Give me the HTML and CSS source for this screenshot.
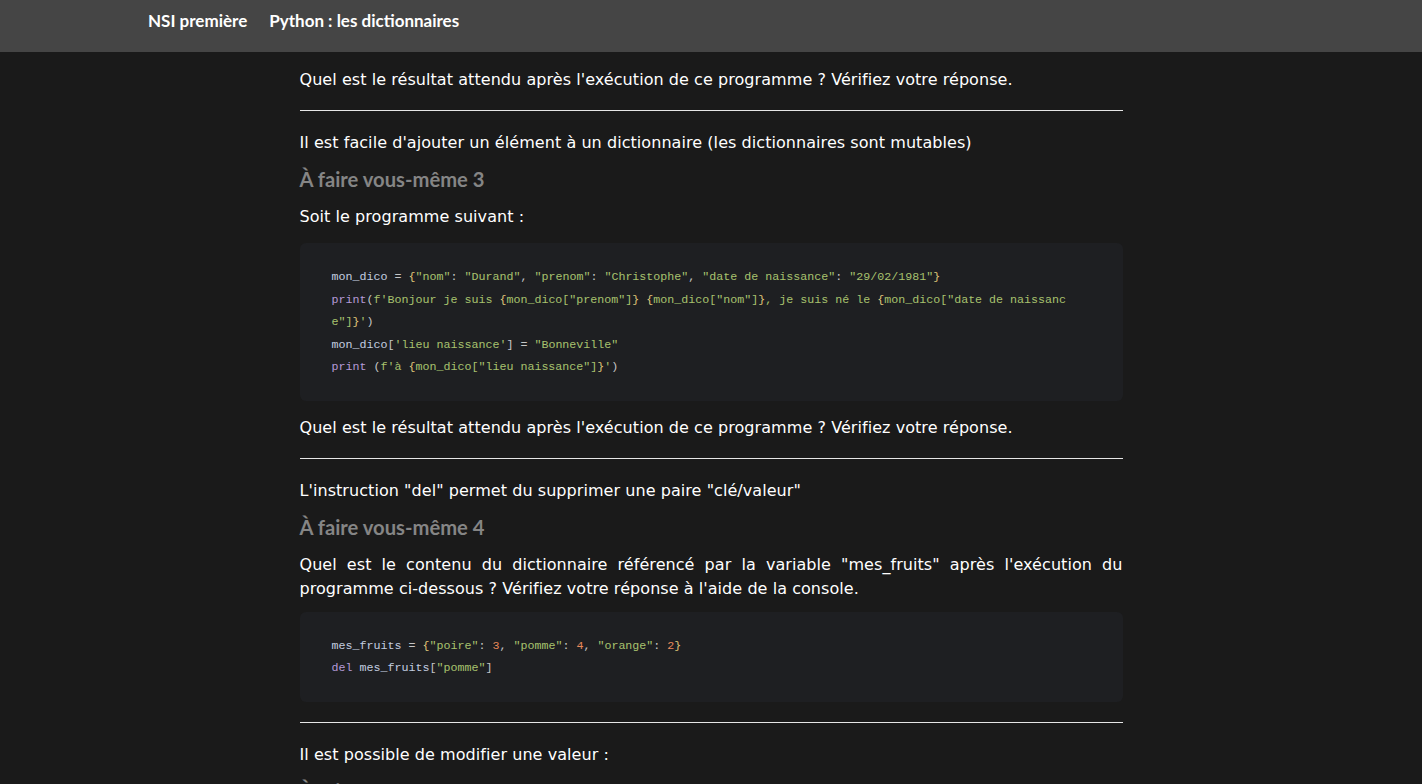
FILE: index.html
```html
<!DOCTYPE html>
<html lang="fr">
<head>
<meta charset="utf-8">
<title>Python : les dictionnaires</title>
<link rel="stylesheet" href="styles.css">
</head>
<body>
<header class="topbar">
  <nav class="topnav">
    <span class="brand">NSI première</span>
    <span class="page-title">Python : les dictionnaires</span>
  </nav>
</header>
<main class="content">
  <p>Quel est le résultat attendu après l'exécution de ce programme ? Vérifiez votre réponse.</p>
  <hr>
  <p>Il est facile d'ajouter un élément à un dictionnaire (les dictionnaires sont mutables)</p>
  <h3>À faire vous-même 3</h3>
  <p>Soit le programme suivant :</p>
  <pre class="code"><span class="id">mon_dico</span> <span class="op">=</span> <span class="br">{</span><span class="str">"nom"</span><span class="op">:</span> <span class="str">"Durand"</span><span class="op">,</span> <span class="str">"prenom"</span><span class="op">:</span> <span class="str">"Christophe"</span><span class="op">,</span> <span class="str">"date de naissance"</span><span class="op">:</span> <span class="str">"29/02/1981"</span><span class="br">}</span>
<span class="kw">print</span><span class="op">(</span><span class="str">f'Bonjour je suis </span><span class="br">{</span><span class="str">mon_dico["prenom"]</span><span class="br">}</span><span class="str"> </span><span class="br">{</span><span class="str">mon_dico["nom"]</span><span class="br">}</span><span class="str">, je suis né le </span><span class="br">{</span><span class="str">mon_dico["date de naissance"]</span><span class="br">}</span><span class="str">'</span><span class="op">)</span>
<span class="id">mon_dico</span><span class="op">[</span><span class="str">'lieu naissance'</span><span class="op">]</span> <span class="op">=</span> <span class="str">"Bonneville"</span>
<span class="kw">print</span> <span class="op">(</span><span class="str">f'à </span><span class="br">{</span><span class="str">mon_dico["lieu naissance"]</span><span class="br">}</span><span class="str">'</span><span class="op">)</span></pre>
  <p>Quel est le résultat attendu après l'exécution de ce programme ? Vérifiez votre réponse.</p>
  <hr>
  <p>L'instruction "del" permet du supprimer une paire "clé/valeur"</p>
  <h3>À faire vous-même 4</h3>
  <p>Quel est le contenu du dictionnaire référencé par la variable "mes_fruits" après l'exécution du programme ci-dessous ? Vérifiez votre réponse à l'aide de la console.</p>
  <pre class="code code-close"><span class="id">mes_fruits</span> <span class="op">=</span> <span class="br">{</span><span class="str">"poire"</span><span class="op">:</span> <span class="num">3</span><span class="op">,</span> <span class="str">"pomme"</span><span class="op">:</span> <span class="num">4</span><span class="op">,</span> <span class="str">"orange"</span><span class="op">:</span> <span class="num">2</span><span class="br">}</span>
<span class="kw">del</span> <span class="id">mes_fruits</span><span class="op">[</span><span class="str">"pomme"</span><span class="op">]</span></pre>
  <hr>
  <p>Il est possible de modifier une valeur :</p>
  <h3>À faire vous-même 5</h3>
  <p>Soit le programme suivant :</p>
</main>
</body>
</html>
```
FILE: styles.css
```css
html, body {
  margin: 0;
  padding: 0;
  background: #1a1a1a;
}
body {
  font-family: "DejaVu Sans", Verdana, sans-serif;
  color: #ffffff;
  font-size: 16px;
}
.topbar {
  background: #454545;
  height: 52px;
}
.topnav {
  display: flex;
  align-items: center;
  height: 41px;
  padding-left: 148px;
  gap: 22px;
  font-family: Lato, "Liberation Sans", sans-serif;
  font-weight: 700;
  font-size: 17px;
  color: #ffffff;
}
.content {
  width: 823px;
  margin: 0 auto;
  padding-top: 16px;
  display: flex;
  flex-direction: column;
  gap: 13px;
}
.content p {
  margin: 0;
  line-height: 24px;
  text-align: justify;
  letter-spacing: 0.06px;
}
.content h3 {
  margin: 0 0 2px;
  font-family: Lato, "Liberation Sans", sans-serif;
  font-weight: 700;
  font-size: 20.2px;
  line-height: 22px;
  color: #858585;
}
.content hr {
  width: 100%;
  border: 0;
  border-top: 1px solid #e6e6e6;
  margin: 5px 0 7px;
}
.code {
  margin: 1px 0 2px;
  background: #1e1f22;
  border-radius: 6px;
  padding: 23px 51px 22px 32px;
  font-family: "Liberation Mono", "DejaVu Sans Mono", monospace;
  font-size: 11.67px;
  line-height: 22.5px;
  color: #c3cde0;
  white-space: pre-wrap;
  word-break: break-all;
}
.code.code-close {
  margin-top: -2px;
}
.code .id { color: #c3cde0; }
.code .op { color: #c6c6c6; }
.code .br { color: #e0c77a; }
.code .str { color: #a8c26e; }
.code .kw { color: #b59ad8; }
.code .num { color: #e8895a; }
```
